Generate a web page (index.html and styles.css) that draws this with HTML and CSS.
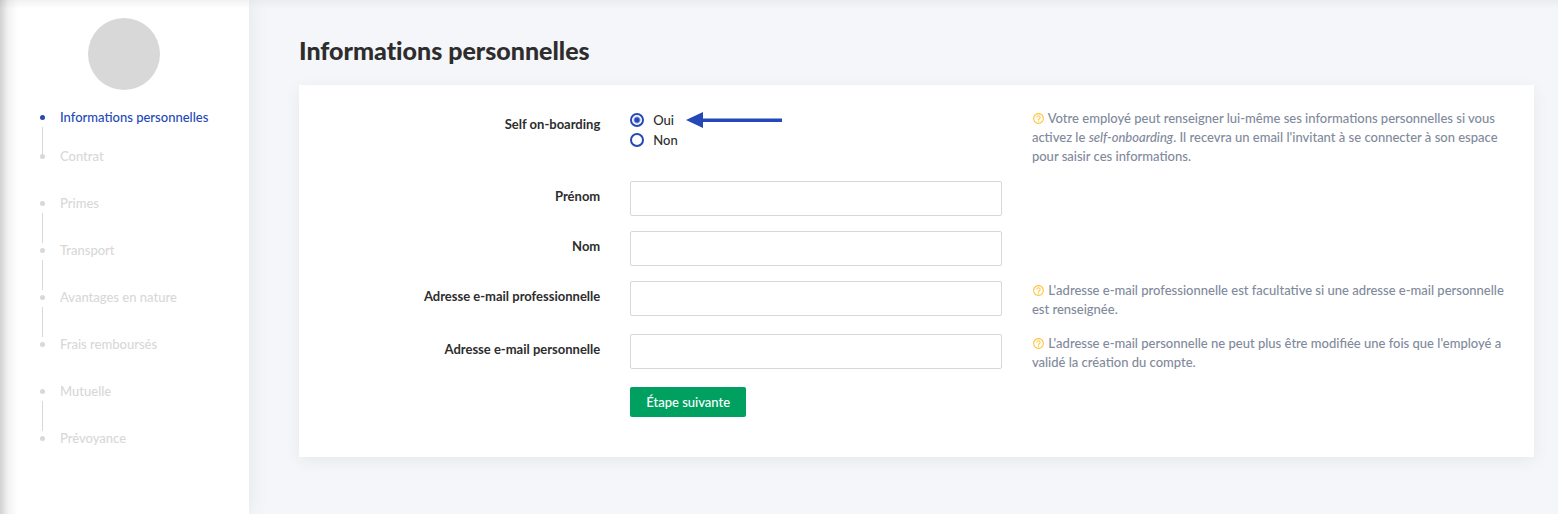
FILE: index.html
```html
<!DOCTYPE html>
<html lang="fr">
<head>
    <meta charset="UTF-8">
    <meta name="viewport" content="width=device-width, initial-scale=1.0">
    <title>Informations personnelles</title>
    <link rel="stylesheet" href="styles.css">
</head>
<body>
    <svg class="sprite" aria-hidden="true">
        <symbol id="help" viewBox="0 0 24 24">
            <path d="M11 18h2v-2h-2v2zm1-16C6.48 2 2 6.48 2 12s4.480 10 10 10 10-4.480 10-10S17.520 2 12 2zm0 18c-4.410 0-8-3.590-8-8s3.590-8 8-8 8 3.590 8 8-3.590 8-8 8zm0-14c-2.210 0-4 1.790-4 4h2c0-1.100.9-2 2-2s2 .9 2 2c0 2-3 1.750-3 5h2c0-2.250 3-2.500 3-5 0-2.210-1.790-4-4-4z"/>
        </symbol>
    </svg>

    <aside class="sidebar">
        <div class="avatar"></div>
        <ul class="steps">
            <li class="step active linked"><span class="marker"></span>Informations personnelles</li>
            <li class="step"><span class="marker"></span>Contrat</li>
            <li class="step linked"><span class="marker"></span>Primes</li>
            <li class="step linked"><span class="marker"></span>Transport</li>
            <li class="step linked"><span class="marker"></span>Avantages en nature</li>
            <li class="step"><span class="marker"></span>Frais remboursés</li>
            <li class="step linked"><span class="marker"></span>Mutuelle</li>
            <li class="step"><span class="marker"></span>Prévoyance</li>
        </ul>
    </aside>

    <main class="content">
        <h1>Informations personnelles</h1>
        <form class="card">
            <div class="row" role="radiogroup" aria-labelledby="onboarding">
                <div class="label" id="onboarding">Self on-boarding</div>
                <div class="field">
                    <div class="choice">
                        <input type="radio" id="oui" name="self" value="oui" checked>
                        <label for="oui">Oui</label>
                        <svg class="arrow" viewBox="0 0 97 18" aria-hidden="true">
                            <path d="M0 9 L17 1 V17 Z"/>
                            <path d="M16 7.500 H96 V11 H16 Z"/>
                        </svg>
                    </div>
                    <div class="choice">
                        <input type="radio" id="non" name="self" value="non">
                        <label for="non">Non</label>
                    </div>
                </div>
                <p class="hint"><svg class="icon"><use href="#help"/></svg> Votre employé peut renseigner lui-même ses informations personnelles si vous activez le <em>self-onboarding</em>. Il recevra un email l'invitant à se connecter à son espace pour saisir ces informations.</p>
            </div>
            <div class="row">
                <label class="label" for="prenom">Prénom</label>
                <div class="field"><input type="text" id="prenom"></div>
            </div>
            <div class="row">
                <label class="label" for="nom">Nom</label>
                <div class="field"><input type="text" id="nom"></div>
            </div>
            <div class="row">
                <label class="label" for="pro">Adresse e-mail professionnelle</label>
                <div class="field"><input type="email" id="pro"></div>
                <p class="hint"><svg class="icon"><use href="#help"/></svg> L'adresse e-mail professionnelle est facultative si une adresse e-mail personnelle est renseignée.</p>
            </div>
            <div class="row">
                <label class="label" for="perso">Adresse e-mail personnelle</label>
                <div class="field"><input type="email" id="perso"></div>
                <p class="hint"><svg class="icon"><use href="#help"/></svg> L'adresse e-mail personnelle ne peut plus être modifiée une fois que l'employé a validé la création du compte.</p>
            </div>
            <div class="row">
                <div class="field actions"><button type="submit">Étape suivante</button></div>
            </div>
        </form>
    </main>
</body>
</html>
```
FILE: styles.css
```css
* {
    box-sizing: border-box;
}

body {
    margin: 0;
    min-height: 100vh;
    display: flex;
    font-family: Lato, "Liberation Sans", sans-serif;
    font-size: 13px;
    font-weight: 500;
    line-height: 19px;
    color: #2d2d2d;
    background-color: #f5f6fa;
}

.sprite {
    display: none;
}

/* Sidebar */
.sidebar {
    flex: 0 0 249px;
    padding-top: 18px;
    background-color: #fff;
    background-image: linear-gradient(to right, rgba(0, 0, 0, 0.18), rgba(0, 0, 0, 0.05) 8px, transparent 18px),
        linear-gradient(rgba(0, 0, 0, 0.05), transparent 9px);
    box-shadow: 0 0 20px rgba(0, 0, 0, 0.08);
}

.avatar {
    width: 72px;
    height: 72px;
    margin: 0 auto 18px 88px;
    border-radius: 50%;
    background-color: #d8d8d8;
}

.steps {
    list-style: none;
    margin: 0;
    padding: 0 0 0 40px;
}

.step {
    display: flex;
    gap: 15px;
    height: 47px;
    color: #d8d8d8;
}

.step.active {
    height: 39px;
    color: #2448b8;
}

.marker {
    width: 5px;
}

.marker::before {
    content: '';
    display: block;
    height: 5px;
    margin: 7px 0;
    border-radius: 50%;
    background-color: currentColor;
}

.linked .marker::after {
    content: '';
    display: block;
    width: 1px;
    height: 30px;
    margin-left: 2px;
    background-color: #d8d8d8;
}

/* Form */
.content {
    flex: 1;
    padding: 35px 24px 36px 50px;
    background-image: linear-gradient(rgba(0, 0, 0, 0.04), transparent 9px);
}

h1 {
    margin: 0 0 20px;
    font-size: 25px;
    line-height: 30px;
    font-weight: 900;
    font-variant-ligatures: none;
}

.card {
    padding: 24px 15px 40px;
    background-color: #fff;
    box-shadow: 0 4px 16px rgba(0, 0, 0, 0.06);
}

.row {
    display: grid;
    grid-template-columns: 3fr 4fr 5fr;
    margin-bottom: 15px;
}

.row:last-child {
    margin-bottom: 0;
}

.row > * {
    padding: 0 15px;
}

.row > .label {
    padding-top: 6px;
    font-weight: bold;
    text-align: right;
}

.actions {
    grid-column: 2;
}

.choice {
    display: flex;
    align-items: center;
    height: 20px;
}

.field {
    min-width: 0;
}

.choice:first-child {
    margin-top: 1px;
}

input[type="radio"] {
    appearance: none;
    width: 14px;
    height: 14px;
    margin: 0 9px 0 0;
    border: 2px solid #2448b8;
    border-radius: 50%;
}

input[type="radio"]:checked {
    background: radial-gradient(circle, #2448b8 2px, #fff 4px);
}

.arrow {
    width: 97px;
    height: 18px;
    margin-left: 12px;
    fill: #2448b8;
}

input[type="text"],
input[type="email"] {
    display: block;
    width: 100%;
    height: 35px;
    padding: 0 10px;
    font: inherit;
    border: 1px solid #d8d8d8;
    border-radius: 2px;
}

.hint {
    margin: 0;
    color: #818a9c;
}

.icon {
    width: 13px;
    height: 13px;
    vertical-align: -2px;
    fill: #ffc53d;
}

button {
    display: block;
    height: 30px;
    padding: 0 16px;
    font: inherit;
    color: #fff;
    background-color: #00a160;
    border: none;
    border-radius: 2px;
    cursor: pointer;
}
```
